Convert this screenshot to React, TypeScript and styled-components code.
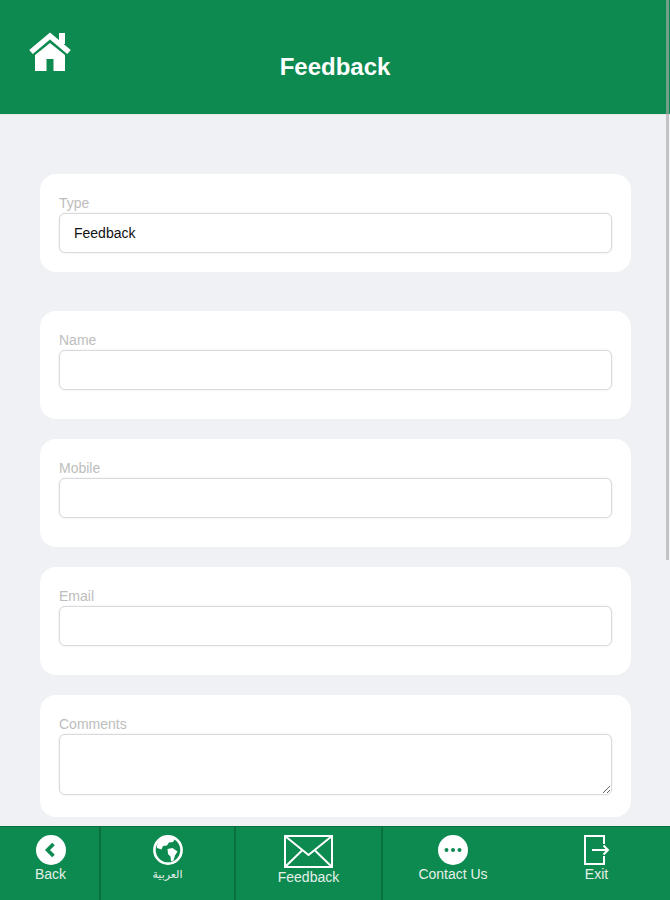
import React from "react";
import styled, { createGlobalStyle } from "styled-components";

const GREEN = "#0d8a4f";

const GlobalStyle = createGlobalStyle`
  html, body {
    margin: 0;
    padding: 0;
    height: 100%;
    overflow: hidden;
    background: #eff1f5;
    font-family: "Liberation Sans", Arial, sans-serif;
  }
`;

function HomeIcon() {
  return (
    <svg width="42" height="39" viewBox="0 0 42 39" fill="#fff">
      <rect x="30" y="1" width="6" height="11" />
      <path d="M6 23 L21 11 L36 23 V39 H24.5 V27 H17.5 V39 H6 Z" />
      <path d="M2 20 L21 4 L40 20" fill="none" stroke="#fff" strokeWidth="5.5" />
    </svg>
  );
}

function BackIcon() {
  return (
    <svg width="30" height="30" viewBox="0 0 30 30">
      <circle cx="15" cy="15" r="15" fill="#fff" />
      <path d="M17.5 9 L11.5 15 L17.5 21" fill="none" stroke={GREEN} strokeWidth="3.6" />
    </svg>
  );
}

function GlobeIcon() {
  return (
    <svg width="30" height="30" viewBox="0 0 30 30">
      <circle cx="15" cy="15" r="13.6" fill="none" stroke="#fff" strokeWidth="2.6" />
      <path
        d="M8 3.5 C11 2 18 1.5 22 4 L20 7 L16 7.5 L14 10.5 L10 11 L8.5 14.5 L4 13 C3.5 9 5.5 5.5 8 3.5 Z"
        fill="#fff"
      />
      <path
        d="M14.5 14 L19.5 13 L24.5 16.5 L22 20.5 L20.5 25.5 L18 26.5 L17.5 21.5 L15 19 Z"
        fill="#fff"
      />
    </svg>
  );
}

function MailIcon() {
  return (
    <svg width="49" height="33" viewBox="0 0 49 33" fill="none" stroke="#fff" strokeWidth="2">
      <rect x="1" y="1" width="47" height="31" />
      <path d="M1 1 L24.5 20 L48 1" />
      <path d="M1 32 L18 15.5 M48 32 L31 15.5" />
    </svg>
  );
}

function ContactIcon() {
  return (
    <svg width="30" height="30" viewBox="0 0 30 30">
      <circle cx="15" cy="15" r="15" fill="#fff" />
      <circle cx="8.5" cy="15" r="2" fill={GREEN} />
      <circle cx="15" cy="15" r="2" fill={GREEN} />
      <circle cx="21.5" cy="15" r="2" fill={GREEN} />
    </svg>
  );
}

function ExitIcon() {
  return (
    <svg width="27" height="30" viewBox="0 0 27 30" fill="none" stroke="#fff" strokeWidth="2">
      <path d="M21 9 V1 H2 V29 H21 V21" />
      <path d="M9 15 H25 M20.5 10.5 L25 15 L20.5 19.5" />
    </svg>
  );
}

const fields = [
  { label: "Type", value: "Feedback", bottom: 19, gap: 39 },
  { label: "Name", value: "", bottom: 29, gap: 20 },
  { label: "Mobile", value: "", bottom: 29, gap: 20 },
  { label: "Email", value: "", bottom: 29, gap: 20 },
];

const tabs = [
  { label: "Back", icon: <BackIcon />, width: 101, divider: true },
  { label: "العربية", icon: <GlobeIcon />, width: 135, divider: true, small: true },
  { label: "Feedback", icon: <MailIcon />, width: 147, divider: true },
  { label: "Contact Us", icon: <ContactIcon />, width: 140 },
  { label: "Exit", icon: <ExitIcon />, width: 147 },
];

export default function App() {
  return (
    <Page>
      <GlobalStyle />
      <Header>
        <HomeLink>
          <HomeIcon />
        </HomeLink>
        <Title>Feedback</Title>
      </Header>
      <Content>
        {fields.map((f) => (
          <Card key={f.label} $bottom={f.bottom} $gap={f.gap}>
            <Label>{f.label}</Label>
            <Input defaultValue={f.value} />
          </Card>
        ))}
        <Card $bottom={22} $gap={0}>
          <Label>Comments</Label>
          <TextArea />
        </Card>
      </Content>
      <Footer>
        {tabs.map((t) => (
          <Tab key={t.label} $width={t.width} $divider={!!t.divider}>
            {t.icon}
            <TabLabel $small={!!t.small}>{t.label}</TabLabel>
          </Tab>
        ))}
      </Footer>
      <ScrollThumb />
    </Page>
  );
}

const Page = styled.div`
  position: relative;
  display: flex;
  flex-direction: column;
  width: 670px;
  height: 900px;
  overflow: hidden;
  background: #eff1f5;
`;

const Header = styled.header`
  display: grid;
  grid-template-columns: 1fr auto 1fr;
  flex: none;
  height: 114px;
  background: ${GREEN};
  border-bottom: 1px solid #e3eae8;
`;

const HomeLink = styled.a`
  display: block;
  padding: 32px 0 0 29px;
`;

const Title = styled.h1`
  margin: 0;
  padding-top: 53px;
  font-size: 24px;
  line-height: 28px;
  font-weight: 700;
  color: #fff;
`;

const Content = styled.main`
  display: flex;
  flex-direction: column;
  flex: 1;
  min-height: 0;
  padding: 59px 39px 0 40px;
`;

const Card = styled.section<{ $bottom: number; $gap: number }>`
  flex: none;
  padding: 20px 19px ${(p) => p.$bottom}px;
  margin-bottom: ${(p) => p.$gap}px;
  background: #fff;
  border-radius: 16px;
`;

const Label = styled.label`
  display: block;
  height: 19px;
  font-size: 14px;
  line-height: 19px;
  color: #bdbdbd;
`;

const Input = styled.input`
  display: block;
  box-sizing: border-box;
  width: 100%;
  height: 40px;
  padding: 0 14px;
  font-family: inherit;
  font-size: 14px;
  color: #111;
  background: #fff;
  border: 1px solid #d9dade;
  border-radius: 6px;
  box-shadow: 0 0 2px #e4e5e8;
  outline: none;
`;

const TextArea = styled.textarea`
  display: block;
  box-sizing: border-box;
  width: 100%;
  height: 61px;
  padding: 8px 14px;
  font-family: inherit;
  font-size: 14px;
  background: #fff;
  border: 1px solid #d9dade;
  border-radius: 6px;
  box-shadow: 0 0 2px #e4e5e8;
  outline: none;
  resize: vertical;
`;

const Footer = styled.footer`
  display: flex;
  flex: none;
  height: 74px;
  background: ${GREEN};
  border-top: 1px solid #0a6f3f;
  box-sizing: border-box;
`;

const Tab = styled.a<{ $width: number; $divider: boolean }>`
  display: flex;
  flex-direction: column;
  align-items: center;
  box-sizing: border-box;
  width: ${(p) => p.$width}px;
  padding-top: 8px;
  border-right: ${(p) => (p.$divider ? "2px solid #0a6f3f" : "none")};

  &:first-child {
    padding-left: 2px;
  }
`;

const TabLabel = styled.span<{ $small: boolean }>`
  margin-top: 1px;
  font-family: "Liberation Sans", "DejaVu Sans", sans-serif;
  font-size: ${(p) => (p.$small ? "11px" : "14px")};
  line-height: 16px;
  color: #e6f0ea;
`;

const ScrollThumb = styled.div`
  position: absolute;
  top: 0;
  right: 1px;
  width: 3px;
  height: 560px;
  background: rgba(170, 170, 170, 0.65);
`;
